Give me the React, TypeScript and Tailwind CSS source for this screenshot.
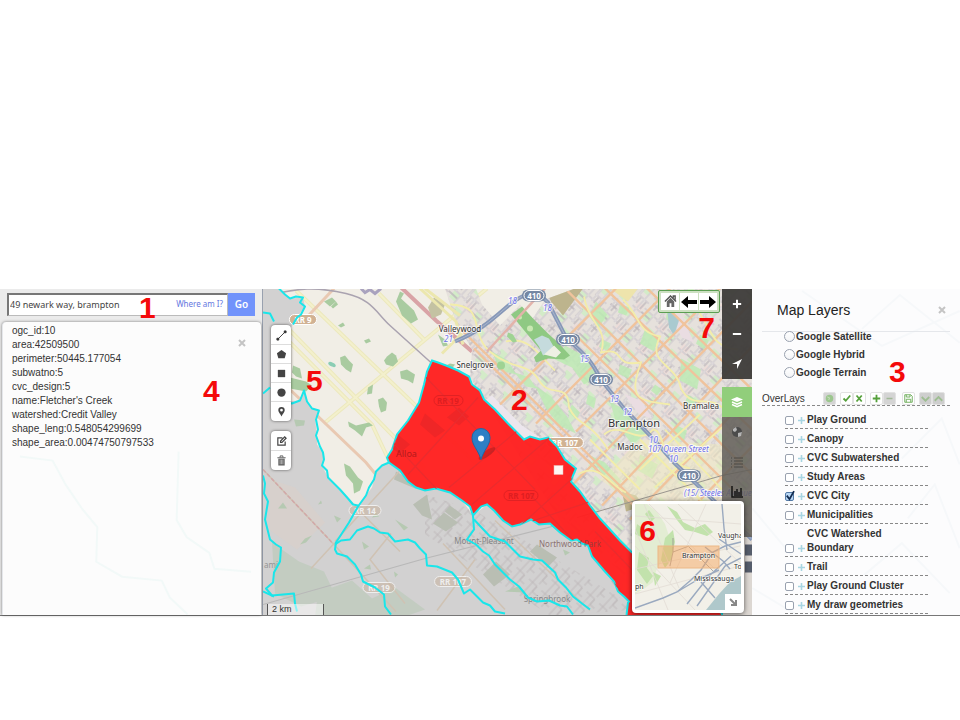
import React from "react";

const CYAN = "#19e6ea";

const WATERSHED =
  "M432 361 L438 363 446 366 458 371 469 377 472 385 480 391 484 400 495 410 508 424 524 440 530 437 540 440 548 438 557 447 565 460 576 469 573 476 571 482 580 492 590 506 600 519 610 530 620 541 631 552 650 568 700 600 722 614 722 620 626 620 628 603 629 602 624 597 618 592 614 582 604 571 592 557 588 546 582 544 577 540 571 541 560 533 550 524 539 525 531 520 520 525 512 527 503 521 494 511 487 505 481 507 473 516 470 507 462 501 450 493 436 489 425 491 416 488 408 482 400 471 389 463 387 458 392 450 397 435 408 421 419 403 424 385 427 372 Z";

const GREY_AREA =
  "M263 289 L279 289 290 299 303 298 305 307 297 318 290 330 272 345 272 392 285 402 300 401 305 391 307 402 312 409 319 411 315 420 317 435 317 445 323 453 323 468 328 478 340 490 357 507 372 488 376 472 382 466 389 463 400 471 408 482 425 491 436 489 450 493 462 501 473 516 487 505 503 521 512 527 531 520 550 524 571 541 588 546 604 571 618 592 629 602 626 616 263 616 Z";

const BOUNDARIES = [
  "M279 289 L285 295 290 299 296 297 303 298 300 303 305 307 301 315 297 318 293 325",
  "M263 313 L270 314 274 322",
  "M263 394 L270 388",
  "M285 402 L292 404 300 401 304 391 307 402 312 409 319 411 316 420 318 430 316 436 320 447 323 453 324 460 322 466 327 471 328 478 340 490 348 499 353 505 358 506",
  "M389 463 L382 466 376 472 374 480 369 488 366 496 358 507 349 523 336 543 335 550 337 554 347 557 355 565 361 575 363 582 375 588 384 595 385 607 391 615",
  "M335 545 L341 541 350 540 357 531 368 527 374 529 380 533 388 534 395 542 408 540 415 543 420 549 426 555 427 566 437 567 452 573 458 580 464 594 470 590 476 596 483 603 490 606 495 612 505 614",
  "M263 476 L265 484 264 494 268 502 265 520 270 540 276 545 281 548 280 562 274 573 273 583 266 589 272 596 283 595 294 594 295 604 297 612",
  "M263 592 L274 597",
  "M473 516 L474 530 467 540 476 545 483 552 489 556 495 565 510 580 519 587 528 598 537 602 549 601 560 606 567 607 573 615",
  "M474 520 L490 537 505 542 520 557 533 560 542 561 555 573 558 580 566 588 573 597 582 604 590 610",
];

const PARKS = [
  "M324 302 l8 -4 4 4 -6 5z", "M331 307 l5 -5 2 3 -5 4z", "M338 326 l5 -3 2 3 -4 2z",
  "M340 358 l5 -2 4 5 4 4 -2 8 -5 -3 -5 -5z", "M364 341 l5 -2 2 3 -5 2z",
  "M387 357 l5 -4 4 3 2 6 -5 5 -7 -2 -2 -4z", "M400 372 l7 -2 8 5 -2 9 -5 -3 -7 -2z",
  "M368 388 l5 -3 -1 9 -5 1z", "M378 400 l5 -2 4 5 -1 8 -5 2 -2 -6z",
  "M348 422 l8 4 13 -3 4 3 -7 2 -4 9 -7 -6 -6 -4z", "M293 366 l7 3 2 10 -6 -2 -4 -4z",
  "M396 302 l4 -10 4 2 -3 5 13 12 4 9 -7 4 -9 -8z", "M344 464 l6 3 8 11 5 4 -3 9 -6 3 -1 -10 -7 -8z",
  "M438 335 l7 5 3 6 -5 1z", "M446 366 l6 3 3 -4 -5 -1z",
];

const COUNTRY_GREENS = [
  "M278 509 l5 -6 4 6z", "M362 542 l7 5 -5 3z", "M372 518 l4 -5 3 4z", "M395 520 l13 8 -4 3z",
  "M364 569 l6 -4 1 5z", "M294 420 l11 1 -1 5 -8 1z", "M505 592 l13 -5 8 6z", "M563 550 l7 3 -5 3z",
  "M394 572 l4 3 -3 3z", "M334 516 l7 3 -4 4z", "M300 545 l5 -6 7 -3 -6 7z", "M318 505 l3 -4 1 3z",
];

const SUBURB_GREENS = [
  "M492 352 l16 9 7 12 14 5 8 11 -11 -2 -10 -12 -16 -4z", "M565 346 l22 12 11 18 -14 9 -12 -17 -17 -8z",
  "M535 386 l16 11 16 20 9 17 -17 -8 -13 -17z", "M596 302 l11 13 -8 13 -10 -11z",
  "M610 402 l18 10 18 22 -14 11 -16 -22z", "M645 330 l14 8 -5 14 -14 -8z",
  "M681 359 l20 11 -4 20 -17 -9z", "M590 456 l15 7 17 19 -11 6z",
  "M670 295 l13 11 -8 23 -9 -10z", "M640 455 l18 10 -6 14 -14 -8z",
  "M588 395 l8 4 -2 10 -8 -5z", "M620 365 l12 5 -4 9 -10 -5z", "M655 385 l7 5 -5 6 -6 -5z",
  "M700 335 l9 6 -5 9 -8 -6z", "M675 425 l12 6 -3 10 -11 -7z", "M602 340 l9 4 -3 8 -9 -5z",
  "M572 405 l8 8 -4 7 -8 -8z", "M620 305 l10 3 -4 8 -8 -3z", "M688 395 l8 5 -4 8 -7 -5z",
];

const FARM_ROADS =
  "M296 291 L480 468 M263 316 L372 425 389 461 M290 331 L425 469 M324 424 L487 289 M379 294 L425 341";

const EXPRESSWAY =
  "M455 342 C477 333 490 322 505 309 S534 287 548 303 L566 338 C580 352 590 357 600 379 L624 409 653 439 674 463 723 510 752 540";

function Shield({ x, y, text, muted }: { x: number; y: number; text: string; muted?: boolean }) {
  return (
    <g opacity={muted ? 0.65 : 1}>
      <rect x={x - (text.length * 2.4 + 4)} y={y - 5} width={text.length * 4.8 + 8} height="10" rx="5"
        fill={muted ? "#c9b8a7" : "#d1b293"} stroke="#fff" />
      <text x={x} y={y + 3} textAnchor="middle" className="font-['Noto_Sans',sans-serif] text-[8px] font-bold" fill="#fff">{text}</text>
    </g>
  );
}

function HighwayShield({ x, y }: { x: number; y: number }) {
  return (
    <g>
      <rect x={x - 12} y={y - 6} width="24" height="12" rx="6" fill="#7587a3" />
      <rect x={x - 10} y={y - 5} width="20" height="10" rx="5" fill="none" stroke="#fff" />
      <text x={x} y={y + 3} textAnchor="middle" className="font-['Noto_Sans',sans-serif] text-[8px] font-bold" fill="#fff">410</text>
    </g>
  );
}

function Place({ x, y, children, className = "text-[9px]" }: { x: number; y: number; children: string; className?: string }) {
  return (
    <text x={x} y={y} textAnchor="middle" fill="#333" stroke="#fff" strokeWidth="2" strokeOpacity="0.65" paintOrder="stroke"
      className={"font-['Noto_Sans',sans-serif] " + className}>{children}</text>
  );
}

function MapCanvas() {
  return (
    <svg viewBox="263 289 489 327" preserveAspectRatio="xMidYMid slice" className="absolute inset-0 h-full w-full" role="img" aria-label="Map of Brampton">
      <defs>
        <pattern id="suburb" width="31" height="29" patternUnits="userSpaceOnUse" patternTransform="rotate(43)">
          <rect width="31" height="29" fill="#e6e1dc" />
          <path d="M16 0h9v7h-9z M4 19h8v8H4z" fill="#d3ebc8" />
          <path d="M22 17h8v9h-8z" fill="#ecdcd8" />
          <g fill="none">
            <path d="M0 4H17V12H31 M5 0V18 M12 8V29 M18 4V20 M25 0V29 M0 18H20 M3 9H11 M20 24H31 M0 23H12 M8 4V14 M21 12V20 M28 12V22" stroke="#bdb6bb" strokeWidth="1.3" />
            <path d="M0 4H17V12H31 M5 0V18 M12 8V29 M18 4V20 M25 0V29 M0 18H20 M20 24H31" stroke="#f8f6f6" strokeWidth="0.6" />
          </g>
        </pattern>
        <pattern id="mutedSuburb" width="17" height="15" patternUnits="userSpaceOnUse" patternTransform="rotate(43)">
          <path d="M0 3H11V10H17 M5 0V15 M11 3V15" fill="none" stroke="#bcb6b8" strokeWidth="0.8" />
        </pattern>
        <clipPath id="city">
          <path d="M445 289 L476 289 482 305 500 326 520 305 532 320 545 300 575 289 H752 V616 H620 L470 378 472 350 455 320Z" />
        </clipPath>
        <clipPath id="grey"><path d={GREY_AREA} /></clipPath>
        <clipPath id="creek"><path d={WATERSHED} /></clipPath>
      </defs>

      <rect x="0" y="0" width="1400" height="1200" fill="#f1eee6" />
      <path d={FARM_ROADS} fill="none" stroke="#ece8bd" strokeWidth="4" />
      <path d={FARM_ROADS} fill="none" stroke="#f3f0cc" strokeWidth="2" />
      <path d="M334 289 L303 322 M290 390 L366 463 389 491" fill="none" stroke="#e9c9b2" strokeWidth="3" />
      <path d="M263 297 C300 288 316 287 346 294 C372 300 376 313 390 326 L432 364" fill="none" stroke="#aaa3b0" strokeWidth="1.5" />
      <path d="M398 285 L436 321 472 352" fill="none" stroke="#d9a3a6" strokeWidth="4" />
      <path d="M290 378 L306 382 312 386 306 392 290 389z" fill="#a9cba0" />
      {PARKS.map((d) => <path key={d} d={d} fill="#a9cba0" />)}
      <ellipse cx="332" cy="365" rx="4" ry="2" fill="#8bcdb4" transform="rotate(25 332 365)" />
      <path d="M428 308 l6 -10 11 7 -4 10 -9 4z" fill="#c4c2a2" />
      <path d="M361 289 l4 4 5 -3 5 4 6 -5" fill="none" stroke="#a9a2be" strokeWidth="3" />

      {/* suburban street fabric */}
      <g clipPath="url(#city)">
        <rect x="263" y="289" width="489" height="327" fill="url(#suburb)" />
        {SUBURB_GREENS.map((d) => <path key={d} d={d} fill="#bdeab4" fillOpacity="0.85" />)}
        <path d="M545 289 h38 l-20 27 -12 -14z M622 492 l14 4 8 10 -18 6z" fill="#bdb48d" />
        <path d="M610 289 l28 0 -10 13z" fill="#eee4ac" />
        <path d="M486 400 L492 396 522 426 540 438 524 441z" fill="#ece6ed" />
        <path d="M664 298 l16 15 14 30 -12 -5 -13 -22z M624 394 l18 8 10 17 -13 -4z" fill="#eadde2" />
        <path d="M667 307 l12 14 -5 15 -5 -8z" fill="#a9cad0" />
        <path d="M640 440 L722 445 722 500 650 515 600 480z" fill="#f2ecc0" fillOpacity="0.5" />
        <g fill="none" stroke="#f0c39c" strokeWidth="2.4">
          <path d="M455 324 L636 502 M575 335 L735 492 M565 289 L752 475 M600 284 L752 430 M642 284 L752 390 M474 349 L545 420 670 541" />
          <path d="M616 289 L500 405 M670 289 L536 424 M720 289 L576 432 M752 302 L570 488 M752 347 L602 506 M752 394 L630 520 M752 447 L650 552" />
        </g>
        <g fill="none" stroke="#f3edaa" strokeWidth="1.8">
          <path d="M450 305 C488 306 467 333 491 353 C513 371 529 363 539 381 C551 400 568 381 569 408 C578 427 589 420 608 450" />
          <path d="M584 297 C589 326 609 328 601 353 C628 347 610 368 641 363 C628 399 637 401 670 405" />
          <path d="M623 300 C642 319 636 332 660 337 C646 365 676 363 681 389 C695 414 710 390 728 414" />
          <path d="M604 435 C622 420 638 448 653 430 C665 430 658 462 690 469 M506 342 C530 336 540 357 555 371" />
          <path d="M694 306 C713 328 708 347 738 350 M578 475 C599 461 612 488 626 493" />
          <path d="M640 470 L700 415 M655 488 L722 428 M640 440 L705 505 M665 430 L722 490 M590 440 L640 490" />
        </g>
        <path d="M577 518 L722 476 752 470" stroke="#99958e" strokeWidth="1" fill="none" />
        <path d="M722 536 h30 v80 h-30z" fill="#dcd7d2" />
        <path d="M745 545 h7 v11 h-7z M745 562 h7 v11 h-7z" fill="#565d6b" />
      </g>

      {/* golf course */}
      <path d="M511 315 L522 307 534 320 548 334 558 343 570 356 564 360 548 359 536 363 534 358 541 351 535 344z" fill="#8fc983" />
      <path d="M534 340 l8 -4 7 3 4 7 -1 6 -9 4 -4 -9z" fill="#c5dbdd" />
      <path d="M544 355 l10 -9 7 7 -5 5z" fill="#eef0e4" />
      <g fill="#c9e8b2"><circle cx="520" cy="318" r="2" /><circle cx="530" cy="329" r="3" /></g>
      <g fill="#9fd393"><circle cx="501" cy="366" r="4" /><path d="M508 333 l5 2 4 7 -4 1 -6 -6z" /></g>
      <path d="M420 289 L456 322 463 345 M425 289 L460 316 M442 354 L462 334" fill="none" stroke="#ece7ae" strokeWidth="3" />
      <path d="M545 289 L487 352" stroke="#e3b3aa" strokeWidth="2.5" />

      {/* expressway */}
      <path d={EXPRESSWAY} fill="none" stroke="#8798b8" strokeWidth="4" />
      <path d={EXPRESSWAY} fill="none" stroke="#a9b5cb" strokeWidth="1" />

      {/* area outside the selected watershed */}
      <path d={GREY_AREA} fill="#d2d1d1" />
      <g clipPath="url(#grey)">
        <path d="M425 495 L473 510 640 610 550 616 425 535z" fill="url(#mutedSuburb)" />
        <path d="M270 480 l25 8 30 35 -28 27 -28 -20z" fill="#d8cfcb" opacity="0.8" />
        <path d="M272 543 l27 19 25 10 12 25 -35 10 -26 -13z M318 593 l34 -12 20 18 23 -11 30 22 -20 7 h-90z" fill="#bccaba" opacity="0.7" />
        <path d="M396 472 l25 14 -6 3 -21 -9z M413 505 l14 -10 5 25 -10 -4z M433 524 l11 -11 14 10 -12 9z M450 506 l12 9 -7 5 -10 -8z M530 552 l7 -7 20 13 -9 9z M483 575 l13 -13 14 13 -16 12z" fill="#b9beb3" />
        {COUNTRY_GREENS.map((d) => <path key={d} d={d} fill="#b6c9b2" />)}
        <path d="M263 470 L333 544 396 612 M335 542 L400 471 M311 569 L335 543 M353 505 L400 552 M391 534 L370 560 405 604 M437 611 L475 560 M443 544 L505 610 M495 521 L590 611" fill="none" stroke="#cfc2b3" strokeWidth="1.5" />
        <path d="M263 470 L333 544" fill="none" stroke="#d2a8a8" strokeWidth="1.5" strokeDasharray="4 2" />
        <path d="M263 605 L425 559 580 520" fill="none" stroke="#b8b8b8" strokeWidth="1.2" />
      </g>

      <Shield x={303} y={320} text="RR 9" />
      <Shield x={365} y={511} text="RR 14" muted />
      <Shield x={379} y={588} text="RR 19" muted />
      <Shield x={453} y={582} text="RR 107" muted />
      <Shield x={565} y={443} text="RR 107" />
      <text x="484" y="544" textAnchor="middle" fill="#858585" className="font-['Noto_Sans',sans-serif] text-[8px]">Mount-Pleasant</text>
      <text x="547" y="602" textAnchor="middle" fill="#858585" className="font-['Noto_Sans',sans-serif] text-[8px]">Springbrook</text>
      <text x="264" y="568" fill="#949494" className="font-['Noto_Sans',sans-serif] text-[8px]">ami</text>

      {/* selected watershed */}
      <path d={WATERSHED} fill="#ff1f1f" fillOpacity="0.96" stroke={CYAN} strokeWidth="2" />
      <g clipPath="url(#creek)">
        <path d="M425 414 L445 431 435 438 420 425z M447 418 l12 -10 10 9 -10 9z M399 436 l11 9 -11 9 -9 -7z" fill="#e02428" opacity="0.5" />
        <path d="M387 437 L456 510 M426 378 L535 490 M408 475 L478 398 M449 488 L531 420 M472 505 L559 430 M516 530 L590 463 M530 495 L620 590 M595 532 L650 589 M531 522 L620 492" fill="none" stroke="#ea2c2e" strokeWidth="1.2" />
        <g fill="none" stroke="#e02224">
          <rect x="434" y="396" width="29" height="10" rx="5" /><rect x="504" y="491" width="34" height="10" rx="5" />
        </g>
        <g fill="#dd1e21" className="font-['Noto_Sans',sans-serif] text-[8px] font-bold">
          <text x="437" y="404">RR 19</text><text x="508" y="499">RR 107</text>
        </g>
        <text x="396" y="457" fill="#b51a1c" className="font-['Noto_Sans',sans-serif] text-[9px]">Alloa</text>
      </g>
      <text x="539" y="547" fill="#6b4444" fillOpacity="0.7" className="font-['Noto_Sans',sans-serif] text-[8px]">Northwood Park</text>
      {BOUNDARIES.map((d) => <path key={d} d={d} fill="none" stroke={CYAN} strokeWidth="2" strokeLinejoin="round" />)}

      <g fill="#6f70ea" stroke="#fff" strokeWidth="2" strokeOpacity="0.75" paintOrder="stroke" className="font-['Noto_Sans',sans-serif] text-[8px] italic">
        <text x="508" y="304">18</text><text x="543" y="311">18</text><text x="444" y="342">21</text>
        <text x="580" y="362">15</text><text x="610" y="402">13</text><text x="623" y="415">12</text>
        <text x="649" y="443">10</text><text x="669" y="462">10</text>
        <text x="648" y="452">107 Queen Street</text><text x="684" y="496">(15/ Steeles Avenue</text>
      </g>
      <HighwayShield x={534} y={296} /><HighwayShield x={568} y={340} />
      <HighwayShield x={601} y={380} /><HighwayShield x={689} y={476} />
      <Place x={460} y={332} className="text-[8px]">Valleywood</Place>
      <Place x={475} y={368} className="text-[8px]">Snelgrove</Place>
      <Place x={701} y={409} className="text-[8px]">Bramalea</Place>
      <Place x={634} y={427} className="text-[11px]">Brampton</Place>
      <Place x={630} y={450} className="text-[8px]">Madoc</Place>

      <ellipse cx="487" cy="454" rx="10" ry="3" fill="#7d1717" opacity="0.35" transform="rotate(-35 487 454)" />
      <path d="M481 460 C478 450 472 446 472 438 A9 9 0 0 1 490 438 C490 446 484 450 481 460z" fill="#2e7fc5" stroke="#2167a4" />
      <circle cx="481" cy="439" r="3" fill="#fff" />
      <rect x="554" y="466" width="9" height="9" fill="#fff6f2" stroke="#e8b9b3" strokeWidth="0.5" />
    </svg>
  );
}

function MiniMap() {
  return (
    <div className="absolute right-2 bottom-0.5 h-[112px] w-[112px] rounded-sm border-[3px] border-white bg-white shadow-[0_1px_5px_rgba(0,0,0,0.6)]">
      <svg viewBox="0 0 106 106" className="block h-full w-full" role="img" aria-label="Overview map">
        <rect width="106" height="106" fill="#f2f0e8" />
        <path d="M0 0h12l10 8 8 12 6 18 -6 14 -8 12 -4 14 -8 6 -10 6z" fill="#e3edd3" />
        <path d="M32 2l10 6 6 10 12 6 10 -4 8 8 -6 4 -12 -4 -10 -2 -8 -10z M30 34l8 -8 2 12 -4 18 -6 8 -4 -8z M2 20l8 6 -2 8 -8 -4z M4 48l10 6 -2 10 6 8 -6 8 -10 -14z M18 68l8 4 -6 10z M14 6l6 8 -4 4 -6 -8z" fill="#c2e2ac" />
        <path d="M106 72 L95 78 84 90 71 106 H106z" fill="#afc8cb" />
        <g fill="none">
          <path d="M0 25L33 106 M9 0L44 84 M0 65L105 42 M0 90L105 62 M14 0L86 71 M43 0L106 60 M0 42L60 106 M71 0L35 79 M0 12L106 20" stroke="#e2dcd4" strokeWidth="0.8" />
          <path d="M38 34v14l-3 14 M38 48l16 -6 M54 43l24 24" stroke="#8f8a8a" strokeWidth="0.7" />
          <path d="M0 104 L28 94 42 88 56 76 66 66 78 48 90 42 106 38 M42 88 L62 76 84 66 M66 78 L80 94 M70 43 L88 57 95 65 M87 0L89 24 92 46 M52 100 L74 72 96 52 M62 102 L90 62 106 54 M84 35 L106 50" stroke="#9aa9bf" strokeWidth="1.4" />
        </g>
        <rect x="23" y="42" width="61" height="22" fill="#f6a55c" fillOpacity="0.48" stroke="#ecb886" />
        <g fill="#333" stroke="#fff" strokeWidth="1.5" strokeOpacity="0.7" paintOrder="stroke" className="font-['Noto_Sans',sans-serif] text-[7px]">
          <text x="83" y="34">Vaugha</text><text x="47" y="54">Brampton</text><text x="59" y="77">Mississauga</text><text x="99" y="65">To</text><text x="0" y="85">ph</text>
        </g>
      </svg>
      <button aria-label="Collapse overview" className="absolute right-0 bottom-0 flex size-4 items-center justify-center bg-white">
        <svg viewBox="0 0 8 8" className="size-2"><path d="M1 1L6 6 M2 7H7V2" fill="none" stroke="#888" strokeWidth="2" /></svg>
      </button>
    </div>
  );
}

const DRAW_TOOLS: [string, React.ReactNode][] = [
  ["Draw line", <path d="M2 10 10 2M1 9h2v2H1zM9 1h2v2H9z" stroke="#333" fill="#333" strokeWidth="1" />],
  ["Draw polygon", <path d="M6 1 11 4.500 9.500 10H2.500L1 4.500z" fill="#444" />],
  ["Draw rectangle", <path d="M2 2h8v8H2z" fill="#444" />],
  ["Draw circle", <circle cx="6" cy="6" r="4.500" fill="#444" />],
  ["Add marker", <path fillRule="evenodd" d="M6 1a3.500 3.500 0 0 1 3.500 3.500C9.500 7 7 8.500 6 11.500 5 8.500 2.500 7 2.500 4.500A3.500 3.500 0 0 1 6 1zm0 2a1.500 1.500 0 1 0 0 3 1.500 1.500 0 0 0 0-3z" fill="#444" />],
];
const EDIT_TOOLS: [string, React.ReactNode][] = [
  ["Edit shapes", <path d="M7 2H2v8h8V6M5 7V5.500L9.500 1 11 2.500 6.500 7z" fill="none" stroke="#444" strokeWidth="1.3" />],
  ["Delete shapes", <><path d="M1.500 3h9M4.500 2.500V1h3v1.500" fill="none" stroke="#555" /><path d="M2.500 4h7v7.500h-7z" fill="#666" /><path d="M4.500 5v5M6 5v5M7.500 5v5" stroke="#ddd" strokeWidth="0.6" /></>],
];

function ToolGroup({ tools }: { tools: [string, React.ReactNode][] }) {
  return (
    <div className="flex w-5 flex-col gap-px rounded-sm bg-white py-px shadow-[0_0_3px_rgba(0,0,0,0.6)]">
      {tools.map(([label, icon]) => (
        <button key={label} aria-label={label} className="flex h-[18px] w-5 items-center justify-center shadow-[0_1px_0_#ddd] last:shadow-none">
          <svg viewBox="0 0 12 12" className="size-[11px]">{icon}</svg>
        </button>
      ))}
    </div>
  );
}

const DARK_TOOLS: [string, React.ReactNode][] = [
  ["Zoom in", <path d="M6 1v10M1 6h10" stroke="#fff" strokeWidth="2.400" />],
  ["Zoom out", <path d="M1 6h10" stroke="#fff" strokeWidth="2.400" />],
  ["Locate me", <path d="M12 0 0 6h6v6z" fill="#fff" />],
];
const PANEL_TOOLS: [string, string, React.ReactNode][] = [
  ["Layers", "bg-[#91ce7b]", <><path d="M6 1l6 2.500L6 6 0 3.500z" fill="#fff" /><path d="M1 6l5 2.200L11 6M1 8.500l5 2.200 5-2.200" fill="none" stroke="#fff" strokeWidth="1.400" /></>],
  ["Base map", "bg-[#605d57]/85", <><circle cx="6" cy="6" r="5" fill="#4b4b4b" /><path d="M2 3l3-2 1 3-2 2 -2 -1z M7 7l4 -1 -1 4 -3 1z" fill="#b5b5b5" /></>],
  ["Legend", "bg-[#605d57]/85", <path d="M0 2h1M3 2h9M0 5h1M3 5h9M0 8h1M3 8h9M0 11h1M3 11h9" stroke="#4a4844" />],
  ["Charts", "bg-[#605d57]/85", <path d="M1 0v11h11M4 10V5M6 10V3M8 10V6M10 10V2" fill="none" stroke="#161616" strokeWidth="1.500" />],
  ["More", "bg-[#605d57]/85", null],
];

function SideBar() {
  return (
    <div className="absolute top-0 right-0 flex w-[30px] flex-col">
      <div className="mb-2 flex flex-col bg-[#3d3b39]/95">
        {DARK_TOOLS.map(([label, icon]) => (
          <button key={label} aria-label={label} className="flex h-[30px] items-center justify-center">
            <svg viewBox="0 0 12 12" className="size-2.5">{icon}</svg>
          </button>
        ))}
      </div>
      {PANEL_TOOLS.map(([label, color, icon]) => (
        <button key={label} aria-label={label} className={"flex h-[30px] items-center justify-center " + color}>
          <svg viewBox="0 0 12 12" className="size-3">{icon}</svg>
        </button>
      ))}
    </div>
  );
}

function NavBar() {
  return (
    <div className="absolute top-px right-8 flex gap-px rounded-xs border border-[#5b9e52] bg-[#cde0c2] p-0.5">
      <button aria-label="Home" className="flex h-[17px] w-[18px] items-center justify-center bg-white">
        <svg viewBox="0 0 14 14" className="size-[13px]"><path d="M1 7l6-6 6 6M10 3V1h2v4" fill="none" stroke="#555" strokeWidth="1.500" /><path d="M3 7l4-4 4 4v6H8V9H6v4H3z" fill="#666" /></svg>
      </button>
      <button aria-label="Previous view" className="flex h-[17px] w-[18px] items-center justify-center bg-white">
        <svg viewBox="0 0 16 14" className="h-3.5 w-4"><path d="M0 7l7-6v4h9v4H7v4z" /></svg>
      </button>
      <button aria-label="Next view" className="flex h-[17px] w-[18px] items-center justify-center bg-white">
        <svg viewBox="0 0 16 14" className="h-3.5 w-4"><path d="M16 7L9 1v4H0v4h9v4z" /></svg>
      </button>
    </div>
  );
}

function Callout({ children, className }: { children: string; className: string }) {
  return <span className={"pointer-events-none absolute text-[30px] leading-none font-bold text-[#f40a0a] " + className}>{children}</span>;
}

const ATTRIBUTES = [
  "ogc_id:10", "area:42509500", "perimeter:50445.177054", "subwatno:5", "cvc_design:5",
  "name:Fletcher's Creek", "watershed:Credit Valley", "shape_leng:0.548054299699", "shape_area:0.00474750797533",
];

function CloseIcon() {
  return <svg viewBox="0 0 8 8" className="size-2"><path d="M1 1l6 6M7 1L1 7" stroke="#c4c4c4" strokeWidth="2" /></svg>;
}

function SearchPanel() {
  return (
    <aside className="relative flex w-[263px] shrink-0 flex-col border-r border-gray-400 bg-[#ebebeb]">
      <form className="mx-[7px] mt-1 mb-1.5 flex h-[23px] items-stretch" onSubmit={(e) => e.preventDefault()}>
        <div className="flex w-[221px] items-center border border-t-2 border-l-2 border-[#bbb] border-t-[#777] border-l-[#777] bg-white pr-1">
          <input aria-label="Address" defaultValue="49 newark way, brampton" className="w-0 flex-1 bg-transparent pl-px font-['Noto_Sans',sans-serif] text-[9px] text-[#444] outline-none" />
          <a href="#locate" className="mb-0.5 font-['Noto_Sans',sans-serif] text-[8px] text-[#6577e0]">Where am I?</a>
        </div>
        <button className="w-[27px] bg-[#7193fb] font-['Noto_Sans',sans-serif] text-[10px] font-semibold text-white">Go</button>
      </form>
      <section className="relative mr-px ml-0.5 flex-1 rounded-t-sm border-l border-gray-200 bg-[#fcfcfc] shadow-[0_0_3px_rgba(0,0,0,0.5)]">
        <svg viewBox="0 0 260 294" className="absolute inset-0 h-full w-full" aria-hidden="true">
          <path d="M17 135l33 4 13 24 17 25 15 18-1 35 26 15 40 4 8 17 18 17M177 130l-2 69 10 17 23 16 5 16 37 3" fill="none" stroke="#f2f9f8" strokeWidth="2" />
        </svg>
        <ul className="relative py-0.5 pl-[9px] text-[10px] leading-[14px] text-[#333]">
          {ATTRIBUTES.map((line) => <li key={line}>{line}</li>)}
        </ul>
        <button aria-label="Close details" className="absolute top-[17px] right-[15px]"><CloseIcon /></button>
      </section>
      <Callout className="top-1 left-[139px]">1</Callout>
      <Callout className="top-[87px] left-[203px]">4</Callout>
    </aside>
  );
}

const BASE_LAYERS = ["Google Satellite", "Google Hybrid", "Google Terrain"];
const OVERLAYS = [
  "Play Ground", "Canopy", "CVC Subwatershed", "Study Areas", "CVC City", "Municipalities",
  "CVC Watershed Boundary", "Trail", "Play Ground Cluster", "My draw geometries",
];
const ACTIONS: [string, string, string, React.ReactNode][] = [
  ["Zoom to layers", "bg-[#d4d4d4]", "mr-1", <><circle cx="6" cy="6" r="5" fill="#9cc68e" /><path d="M3 4l3 1-1 3" stroke="#d4e7cb" fill="none" /></>],
  ["Select all", "bg-white", "", <path d="M2 6l3 3 6-7" stroke="#55a03b" strokeWidth="2.400" fill="none" />],
  ["Select none", "bg-white", "mr-1", <path d="M2 2l7 8M9 2l-7 8" stroke="#55a03b" strokeWidth="2.400" />],
  ["Expand all", "bg-white", "", <path d="M6 1v10M1 6h10" stroke="#55a03b" strokeWidth="2.400" />],
  ["Collapse all", "bg-[#d4d4d4]", "mr-1.5", <path d="M2 6h8" stroke="#a0b897" strokeWidth="2" />],
  ["Save", "bg-white", "mr-1", <path d="M1 1h8l2 2v8H1zM3 1v3h5V1M3 11V7h6v4" stroke="#68a954" strokeWidth="1.200" fill="none" />],
  ["Move down", "bg-[#cecece]", "", <path d="M1 4l5 5 5-5" stroke="#9ebd92" strokeWidth="2.400" fill="none" />],
  ["Move up", "bg-[#cecece]", "", <path d="M1 9l5-5 5 5" stroke="#9ebd92" strokeWidth="2.400" fill="none" />],
];

function LayersPanel() {
  return (
    <aside className="relative w-[208px] shrink-0 bg-[#fcfcfd] pr-2.5 pl-2.5 text-[10px] text-[#333]">
      <svg viewBox="0 0 208 327" className="absolute inset-0 h-full w-full" aria-hidden="true">
        <path d="M50 2l80 55 78-35M110 40l38-34 60 48M150 170l40-40 18 46M0 220l40 48M156 230l27-34 25 64M0 300l45 27M112 287l38-32 48 50" fill="none" stroke="#f6f8fa" strokeWidth="2" />
      </svg>
      <div className="relative">
        <header className="flex h-[43px] items-center justify-between border-b border-gray-200 pr-1 pl-[15px]">
          <h2 className="text-[14px] font-normal text-[#222]">Map Layers</h2>
          <button aria-label="Close layers"><CloseIcon /></button>
        </header>
        <div className="-mt-[5px] flex flex-col pl-[22px]">
          {BASE_LAYERS.map((name) => (
            <label key={name} className="flex h-[18px] items-center gap-px font-bold">
              <input type="radio" name="base" className="size-[11px] appearance-none rounded-full border border-gray-400 bg-white bg-linear-to-b from-white to-gray-100" />{name}
            </label>
          ))}
        </div>
        <div className="mt-2.5 flex h-[15px] items-center border-b border-dashed border-[#888]">
          <span className="mr-[18px]">OverLays</span>
          {ACTIONS.map(([label, color, gap, icon]) => (
            <button key={label} aria-label={label} className={"flex h-[13px] w-[13px] shrink-0 items-center justify-center rounded-xs border border-[#e2e2e2] " + color + " " + gap}>
              <svg viewBox="0 0 12 12" className="size-[9px]">{icon}</svg>
            </button>
          ))}
        </div>
        <ul className="mt-1 ml-[23px] w-[143px]">
          {OVERLAYS.map((name) => (
            <li key={name} className="border-b border-dashed border-[#888] pt-[3px] pb-px">
              <label className="flex items-end font-bold">
                <input type="checkbox" defaultChecked={name === "CVC City"} className="peer sr-only" />
                <span className="mr-1 mb-0.5 flex size-[9px] shrink-0 items-center justify-center rounded-xs border border-gray-400 bg-white peer-checked:border-[#547aa6] peer-checked:bg-[#b7d6f5]">
                  {name === "CVC City" && <svg viewBox="0 0 10 10" className="size-[9px] shrink-0 overflow-visible"><path d="M2 4l3 4 5-9" fill="none" stroke="#132c50" strokeWidth="2" /></svg>}
                </span>
                <svg viewBox="0 0 7 7" className="mr-0.5 mb-[3px] size-[7px] shrink-0" aria-hidden="true"><path d="M3.500 0v7M0 3.500h7" stroke="#a8d5e2" strokeWidth="1.600" /></svg>
                <span className="max-w-[100px] leading-[14px]">{name}</span>
              </label>
            </li>
          ))}
        </ul>
      </div>
      <Callout className="top-[68px] left-[137px]">3</Callout>
    </aside>
  );
}

export default function App() {
  return (
    <div className="min-h-screen bg-white pt-[289px] font-['Liberation_Sans',Arial,sans-serif]">
      <main className="flex items-stretch border-b border-[#777]">
        <SearchPanel />
        <section className="relative min-h-[326px] min-w-0 flex-1 overflow-hidden" aria-label="Map">
          <MapCanvas />
          <div className="absolute top-9 left-2 flex flex-col gap-2.5">
            <ToolGroup tools={DRAW_TOOLS} />
            <ToolGroup tools={EDIT_TOOLS} />
          </div>
          <div className="absolute bottom-0 left-1 h-[11px] w-[57px] border-x border-[#555] bg-white/50 pl-1 text-[9px] leading-[11px] text-[#333]">2 km</div>
          <NavBar />
          <SideBar />
          <MiniMap />
          <Callout className="top-[96px] left-[248px] max-sm:hidden">2</Callout>
          <Callout className="top-[77px] left-[43px]">5</Callout>
          <Callout className="right-[96px] bottom-[69px]">6</Callout>
          <Callout className="top-6 right-[37px]">7</Callout>
        </section>
        <LayersPanel />
      </main>
    </div>
  );
}
